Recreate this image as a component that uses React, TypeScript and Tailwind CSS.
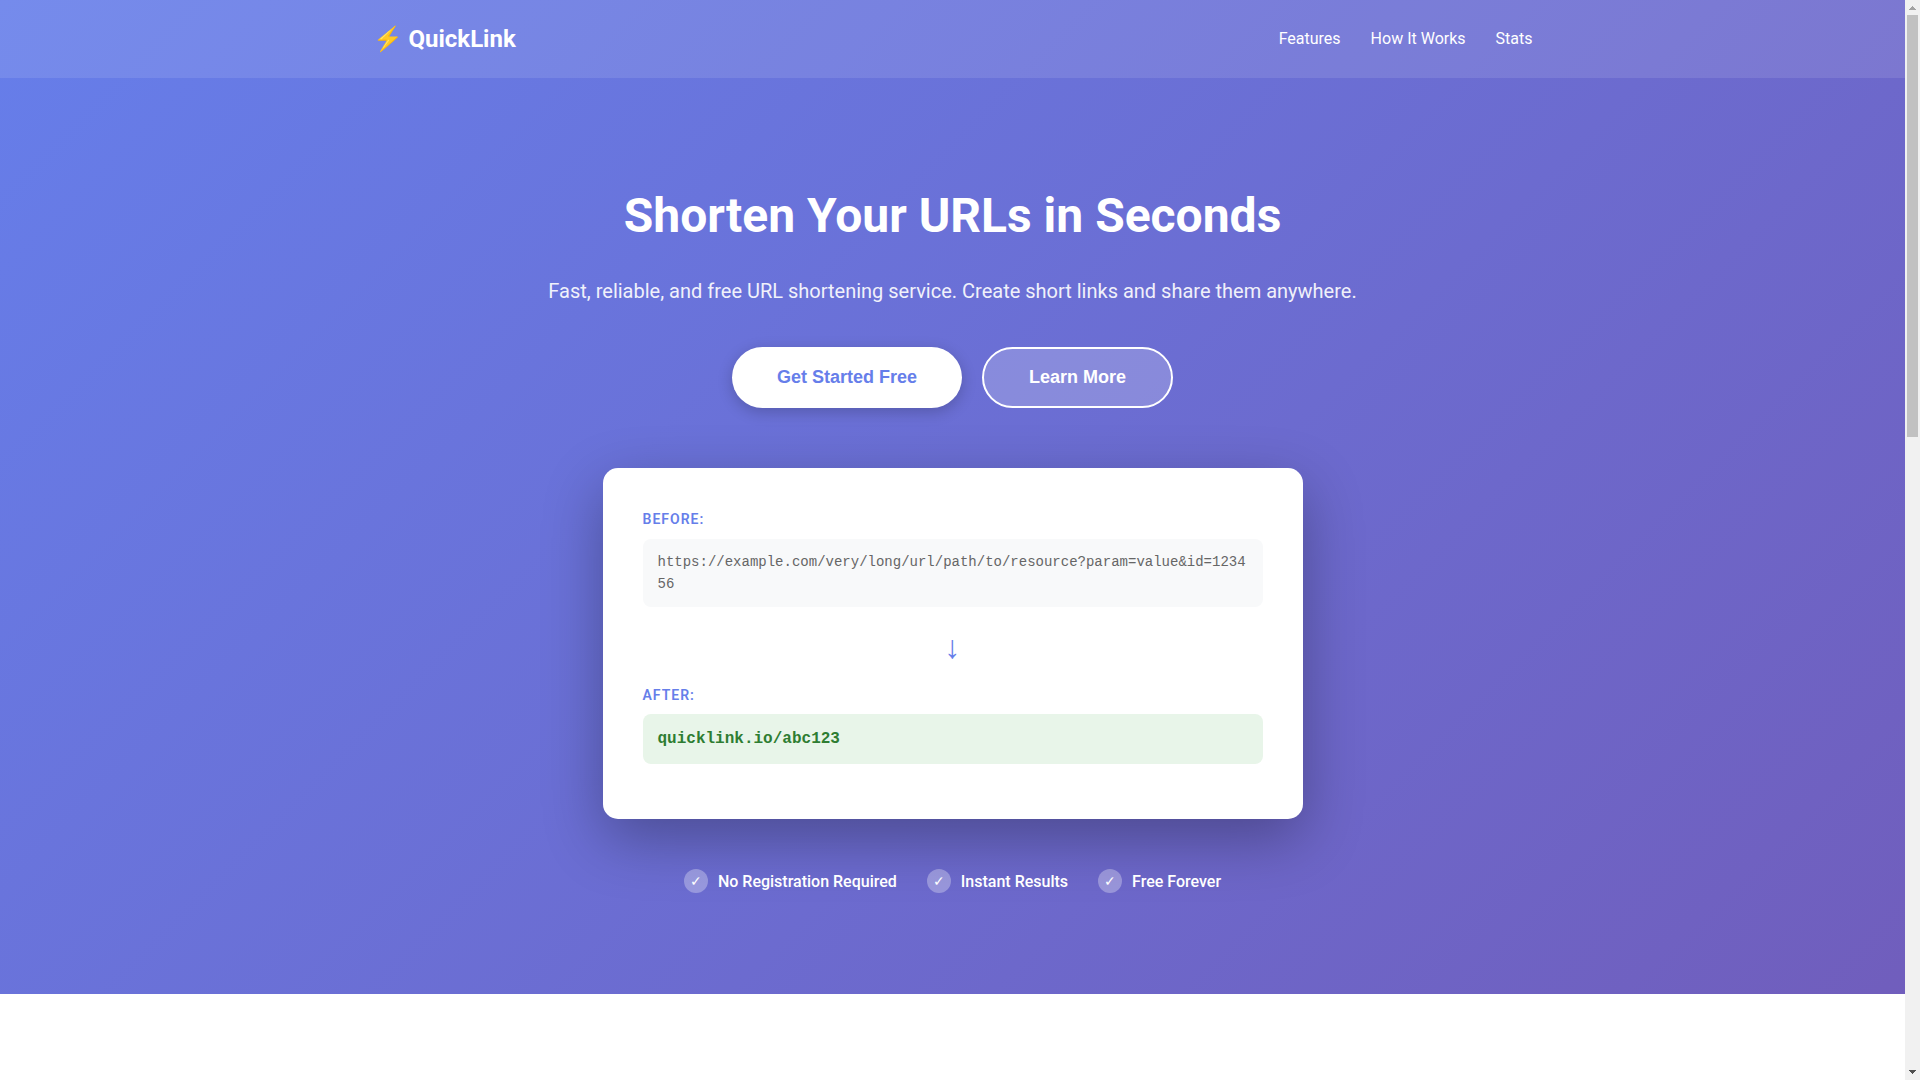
import React from "react";

const navLinks = [
  { label: "Features", href: "#features" },
  { label: "How It Works", href: "#how-it-works" },
  { label: "Stats", href: "#stats" },
];

const perks = ["No Registration Required", "Instant Results", "Free Forever"];

const Header = () => {
  return (
    <header className="bg-white/10 py-5">
      <div className="max-w-[1200px] mx-auto px-5 flex items-center justify-between">
        <div className="text-2xl leading-[38px] font-bold text-white">⚡ QuickLink</div>
        <nav className="flex gap-[30px]">
          {navLinks.map((link) => (
            <a key={link.href} href={link.href} className="text-base leading-[26px] text-white">
              {link.label}
            </a>
          ))}
        </nav>
      </div>
    </header>
  );
};

const Demo = () => {
  return (
    <div className="max-w-[700px] mx-auto bg-white rounded-[15px] p-10 text-left shadow-[0_20px_60px_rgba(0,0,0,0.3)]">
      {/* Before */}
      <div className="mb-[15px]">
        <div className="text-sm leading-[22px] font-semibold tracking-[1px] text-[#667eea] mb-[9px]">
          BEFORE:
        </div>
        <div className="bg-[#f8f9fa] rounded-lg px-[15px] py-3 font-['Liberation_Mono',monospace] text-sm leading-[22px] text-[#666] break-all">
          https://example.com/very/long/url/path/to/resource?param=value&amp;id=123456
        </div>
      </div>

      <div className="text-center text-[32px] leading-[51px] text-[#667eea] mb-[11px]">↓</div>

      {/* After */}
      <div className="mb-[15px]">
        <div className="text-sm leading-[22px] font-semibold tracking-[1px] text-[#667eea] mb-2">
          AFTER:
        </div>
        <div className="bg-[#e8f5e9] rounded-lg px-[15px] py-3 font-['Liberation_Mono',monospace] text-base leading-[26px] font-bold text-[#2e7d32] break-all">
          quicklink.io/abc123
        </div>
      </div>
    </div>
  );
};

const Hero = () => {
  return (
    <section className="py-[100px] text-center text-white">
      <div className="max-w-[1200px] mx-auto px-5">
        <h1 className="text-5xl leading-[76px] font-bold mb-[21px]">Shorten Your URLs in Seconds</h1>
        <p className="text-xl leading-8 opacity-90 mb-10">
          Fast, reliable, and free URL shortening service. Create short links and share them anywhere.
        </p>

        <div className="flex flex-wrap justify-center gap-5 mb-[60px] font-['Liberation_Sans',sans-serif] text-lg leading-[21px] font-semibold">
          <button className="bg-white text-[#667eea] rounded-full px-[45px] py-5 shadow-[0_4px_15px_rgba(0,0,0,0.2)]">
            Get Started Free
          </button>
          <button className="bg-white/20 text-white border-2 border-white rounded-full px-[45px] py-[18px]">
            Learn More
          </button>
        </div>

        <Demo />

        <ul className="flex flex-wrap justify-center gap-[30px] mt-[50px]">
          {perks.map((perk) => (
            <li key={perk} className="flex items-start gap-2.5 text-base leading-[25px] font-medium">
              <span className="size-6 rounded-full bg-white/30 flex items-center justify-center text-sm">
                ✓
              </span>
              {perk}
            </li>
          ))}
        </ul>
      </div>
    </section>
  );
};

const Scrollbar = () => {
  return (
    <div className="w-[15px] shrink-0 bg-[#f1f1f1] flex flex-col items-center" aria-hidden="true">
      <svg className="w-[15px] h-[15px] shrink-0" viewBox="0 0 15 15" shapeRendering="crispEdges">
        <path d="M7 6h1v1h1v1h1v1h1v1H4V9h1V8h1V7h1z" fill="#a3a3a3" />
      </svg>
      <div className="flex-1 w-full px-0.5">
        <div className="h-[40.2%] bg-[#c1c1c1]" />
      </div>
      <svg className="w-[15px] h-[15px] shrink-0" viewBox="0 0 15 15" shapeRendering="crispEdges">
        <path d="M4 5h7v1h-1v1H9v1H8v1H7V8H6V7H5V6H4z" fill="#505050" />
      </svg>
    </div>
  );
};

const App = () => {
  return (
    <div className="h-screen flex overflow-hidden font-[Roboto,sans-serif]">
      <div className="flex-1 flex flex-col overflow-hidden bg-[linear-gradient(135deg,#667eea_0%,#764ba2_100%)] bg-[length:100%_2687px] bg-no-repeat">
        <Header />
        <Hero />
        <section id="features" className="flex-1 bg-white" />
      </div>
      <Scrollbar />
    </div>
  );
};

export default App;
